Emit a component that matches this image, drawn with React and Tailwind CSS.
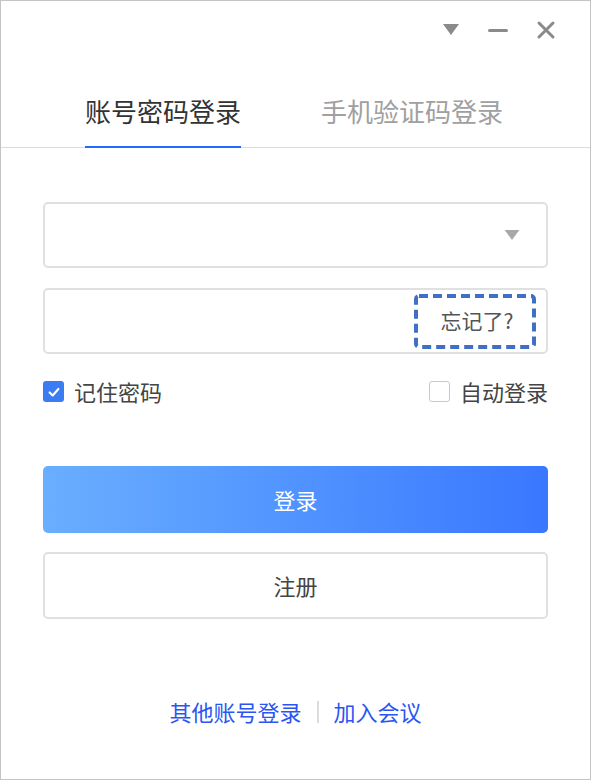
const font = { fontFamily: '"Noto Sans CJK SC", "Noto Sans", sans-serif' };

const TriangleDown = ({ className }) => (
  <svg viewBox="0 0 16 12" className={className}>
    <path d="M0 0 H16 L8 11 Z" fill="currentColor" />
  </svg>
);

const Checkbox = ({ checked }) =>
  checked ? (
    <span className="w-[21px] h-[21px] rounded-[3px] bg-[#3b7cf5] flex items-center justify-center">
      <svg viewBox="0 0 16 16" className="w-[14px] h-[14px]">
        <path d="M3 8.5 L6.5 12 L13 4.5" fill="none" stroke="white" strokeWidth="2.4" strokeLinecap="round" strokeLinejoin="round" />
      </svg>
    </span>
  ) : (
    <span className="w-[21px] h-[21px] rounded-[3px] border border-[#c9c9c9] bg-white" />
  );

export default function App() {
  return (
    <div
      className="w-[591px] h-[780px] bg-white border border-[#c4c4c4] flex flex-col"
      style={font}
    >
      {/* title bar */}
      <div className="flex items-center justify-end gap-[28px] pt-[5px] pr-[34px] h-[58px]">
        <TriangleDown className="w-[18px] h-[12px] text-[#8a8a8a] mb-[5px]" />
        <span className="w-[20px] h-[3px] bg-[#8a8a8a] rounded-sm mb-[5px]" />
        <svg viewBox="0 0 20 20" className="w-[20px] h-[20px] mb-[5px]">
          <path d="M3 3 L17 17 M17 3 L3 17" stroke="#8a8a8a" strokeWidth="3" strokeLinecap="round" />
        </svg>
      </div>

      {/* tabs */}
      <div className="flex border-b border-[#dcdcdc] pl-[84px] mt-[35px]">
        <div className="flex flex-col items-center">
          <span className="text-[26px] leading-[34px] text-[#333] pb-[18px]">账号密码登录</span>
          <span className="h-[2px] w-full bg-[#2468ff] -mb-[1px]" />
        </div>
        <div className="ml-[80px]">
          <span className="text-[26px] leading-[34px] text-[#a0a0a0]">手机验证码登录</span>
        </div>
      </div>

      {/* form */}
      <div className="px-[42px] mt-[54px] flex flex-col">
        <div className="h-[66px] rounded-[5px] border-2 border-[#e0e0e0] flex items-center justify-end pr-[26px]">
          <TriangleDown className="w-[16px] h-[11px] text-[#a8a8a8]" />
        </div>

        <div className="h-[66px] mt-[20px] rounded-[5px] border-2 border-[#e0e0e0] flex items-center justify-end pr-[10px]">
          <div className="relative w-[122px] h-[55px] flex items-center justify-center">
            <svg className="absolute inset-0" width="122" height="55" viewBox="0 0 122 55">
              <rect x="2" y="2" width="118" height="51" rx="3" fill="none" stroke="#4070c4" strokeWidth="4" strokeDasharray="9 5" />
            </svg>
            <span className="text-[21px] text-[#555] pl-[4px]">忘记了?</span>
          </div>
        </div>

        <div className="flex items-center justify-between mt-[21px]">
          <label className="flex items-center gap-[10px]">
            <Checkbox checked />
            <span className="text-[22px] text-[#444]">记住密码</span>
          </label>
          <label className="flex items-center gap-[10px]">
            <Checkbox />
            <span className="text-[22px] text-[#444]">自动登录</span>
          </label>
        </div>

        <button className="h-[67px] mt-[58px] rounded-[5px] bg-gradient-to-r from-[#6aaeff] to-[#3a77ff] text-white text-[22px]">
          登录
        </button>

        <button className="h-[67px] mt-[19px] rounded-[5px] border-2 border-[#e0e0e0] bg-white text-[#444] text-[22px]">
          注册
        </button>
      </div>

      {/* footer */}
      <div className="flex items-center justify-center mt-[76px] text-[22px] text-[#2a55f2]">
        <span>其他账号登录</span>
        <span className="w-[2px] h-[22px] bg-[#dcdcdc] mx-[15px]" />
        <span>加入会议</span>
      </div>
    </div>
  );
}
